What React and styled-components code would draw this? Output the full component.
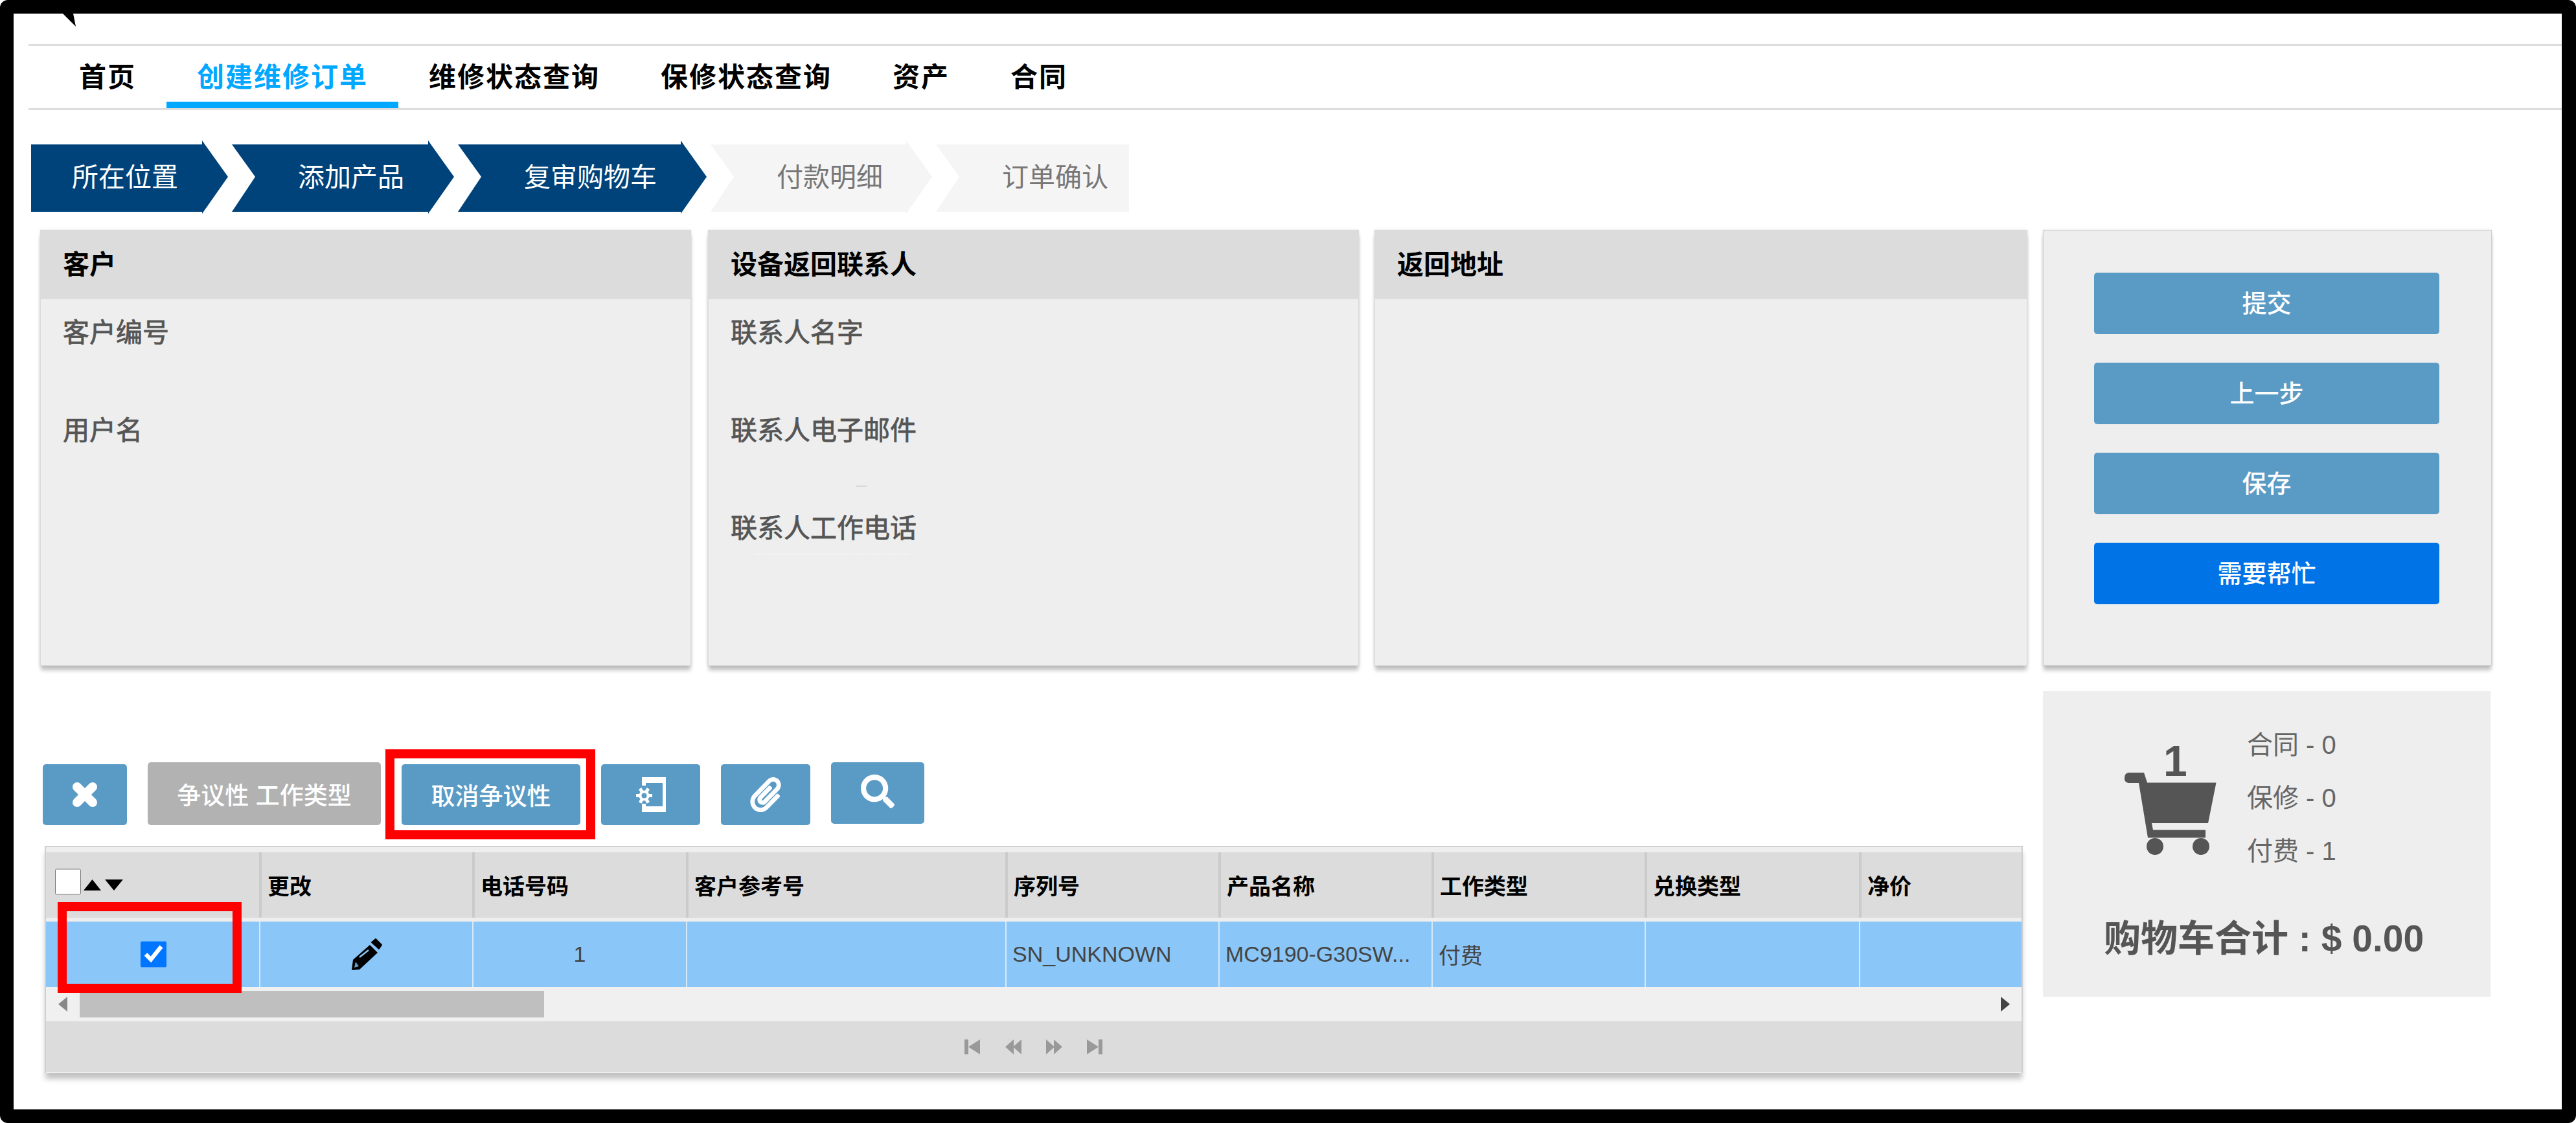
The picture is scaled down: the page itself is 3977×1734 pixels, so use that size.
import styled, { createGlobalStyle } from 'styled-components';
import { FaPaperclip, FaSearch } from 'react-icons/fa';

const GlobalStyle = createGlobalStyle`
  html, body { margin: 0; padding: 0; background: #fff; }
  body { font-family: "Liberation Sans", "Noto Sans CJK SC", sans-serif; }
  * { box-sizing: border-box; }
`;

const COLUMNS = '329px 329px 330px 493px 329px 329px 329px 331px 251px';
const FONT = '"Liberation Sans", "Noto Sans CJK SC", sans-serif';

const Frame = styled.div`
  position: relative;
  width: 3977px;
  height: 1734px;
  border: 21px solid #000;
  border-right-width: 22px;
  border-radius: 12px;
  background: #fff;
  overflow: hidden;
`;
const CornerMark = styled.svg`
  position: absolute;
  left: 76px;
  top: 0;
`;
const TopBar = styled.div`
  height: 50px;
  margin-left: 23px;
  border-bottom: 3px solid #ddd;
`;
const NavBar = styled.nav`
  display: flex;
  height: 99px;
  margin-left: 23px;
  padding: 12px 0 0 31px;
  border-bottom: 3px solid #ddd;
`;
const NavItem = styled.a`
  height: 84px;
  padding: 0 47px;
  font-size: 42px;
  font-weight: 700;
  letter-spacing: 2px;
  line-height: 74px;
  color: ${(p) => (p.$active ? '#00a8ff' : '#000')};
  border-bottom: 10px solid ${(p) => (p.$active ? '#00a8ff' : 'transparent')};
`;
const StepBar = styled.div`
  display: flex;
  gap: 6px;
  margin: 47px 0 0 27px;
`;
const Step = styled.div`
  width: ${(p) => p.$width}px;
  height: 113px;
  padding-left: ${(p) => (p.$first ? 63 : 102)}px;
  font-size: 41px;
  line-height: 114px;
  color: ${(p) => (p.$done ? '#fff' : '#777')};
  background: ${(p) => (p.$done ? '#00437a' : '#f5f5f5')};
  clip-path: polygon(
    0 6px,
    ${(p) => (p.$last ? '100% 6px, 100% 110px' : 'calc(100% - 40px) 6px, calc(100% - 40px) 0, 100% 56px, calc(100% - 40px) 113px, calc(100% - 40px) 110px')},
    0 110px
    ${(p) => (p.$first ? '' : ', 36px 56px')}
  );
`;
const PanelRow = styled.div`
  display: grid;
  grid-template-columns: 1007px 1005px 1008px 693px;
  column-gap: 24px;
  margin: 25px 0 0 41px;
`;
const Panel = styled.section`
  height: 673px;
  margin-right: ${(p) => p.$trim || 0}px;
  background: #eee;
  border: 1px solid #dcdcdc;
  box-shadow: 0 8px 6px -1px rgba(0, 0, 0, 0.24), 0 0 4px rgba(0, 0, 0, 0.12);
`;
const PanelHead = styled.h2`
  margin: 0;
  height: 106px;
  padding-left: 34px;
  background: #dcdcdc;
  font-size: 41px;
  font-weight: 700;
  line-height: 106px;
  color: #000;
`;
const PanelBody = styled.div`
  padding: 27px 34px 0;
`;
const FieldLabel = styled.div`
  position: relative;
  height: 151px;
  font-size: 41px;
  line-height: 50px;
  color: #555;
  -webkit-text-stroke: 0.8px #555;
  &::before {
    content: '';
    display: ${(p) => (p.$marked ? 'block' : 'none')};
    position: absolute;
    left: 193px;
    top: -41px;
    width: 17px;
    border-top: 1px solid #aaa;
  }
  &::after {
    content: '';
    display: ${(p) => (p.$marked ? 'block' : 'none')};
    position: absolute;
    left: 38px;
    top: 64px;
    width: 238px;
    border-top: 1px dashed #fff;
  }
`;
const ActionPanel = styled(Panel)`
  display: flex;
  flex-direction: column;
  gap: 44px;
  padding: 65px 80px 0 78px;
  border-color: #d0d0d0;
`;
const ActionButton = styled.button`
  height: 95px;
  padding: 0 0 6px;
  border: 0;
  border-radius: 5px;
  background: ${(p) => (p.$help ? '#0073e6' : '#5a9bc6')};
  font-family: ${FONT};
  font-size: 38px;
  font-weight: 500;
  color: #fff;
`;
const LowerRow = styled.div`
  display: grid;
  grid-template-columns: 3092px 691px;
  margin: 39px 0 0 41px;
`;
const LowerLeft = styled.div`
  padding: 110px 0 0 4px;
`;
const Toolbar = styled.div`
  display: flex;
  align-items: flex-start;
  gap: 32px;
  height: 97px;
`;
const ToolButton = styled.button`
  position: relative;
  display: flex;
  align-items: center;
  justify-content: center;
  width: ${(p) => p.$width}px;
  height: ${(p) => (p.$height ? p.$height : 94)}px;
  margin-top: ${(p) => (p.$raised ? 0 : 3)}px;
  padding: 0 0 ${(p) => p.$lift || 0}px;
  border: 0;
  border-radius: 5px;
  background: ${(p) => (p.$muted ? '#b2b2b2' : '#5a9bc6')};
  font-family: ${FONT};
  font-size: 37px;
  font-weight: 500;
  color: #fff;
`;
const RedBox = styled.span`
  position: absolute;
  left: ${(p) => p.$left}px;
  right: ${(p) => p.$right}px;
  top: ${(p) => p.$top}px;
  bottom: ${(p) => p.$bottom}px;
  border: 14px solid #ff0000;
  z-index: 2;
  pointer-events: none;
`;
const Table = styled.div`
  width: 3054px;
  height: 351px;
  margin: 32px 0 0 3px;
  background: #eee;
  border: 2px solid #d0d0d0;
  border-bottom: 0;
  box-shadow: 0 10px 8px -1px rgba(0, 0, 0, 0.24);
`;
const HeaderRow = styled.div`
  display: grid;
  grid-template-columns: ${COLUMNS};
  height: 101px;
  margin-top: 8px;
`;
const HeaderCell = styled.div`
  display: flex;
  align-items: center;
  padding-left: ${(p) => (p.$first ? 12 : 9)}px;
  background: #dcdcdc;
  border-left: 4px solid ${(p) => (p.$first ? 'transparent' : '#cbcbcb')};
  font-size: 34px;
  font-weight: 700;
  color: #000;
`;
const BodyRow = styled.div`
  display: grid;
  grid-template-columns: ${COLUMNS};
  height: 101px;
  margin-top: 6px;
  background: #8ac6f7;
`;
const BodyCell = styled.div`
  position: relative;
  display: flex;
  align-items: center;
  justify-content: ${(p) => (p.$center ? 'center' : 'flex-start')};
  padding-left: ${(p) => (p.$center ? 0 : 9)}px;
  border-left: 2px solid ${(p) => (p.$first ? 'transparent' : '#d6e9fb')};
  font-size: 34px;
  color: #444;
  white-space: nowrap;
`;
const CheckBox = styled.input`
  flex: none;
  width: 40px;
  height: 41px;
  margin: ${(p) => (p.$raised ? '-10px 0 0 -2px' : 0)};
  accent-color: #0075ff;
`;
const SortArrows = styled.svg`
  flex: none;
  margin-left: 4px;
`;
const ScrollTrack = styled.div`
  display: flex;
  align-items: center;
  justify-content: space-between;
  height: 53px;
  padding: 0 18px 0 19px;
  background: #f0f0f0;
`;
const ScrollThumb = styled.div`
  width: 717px;
  height: 41px;
  margin: 0 auto 0 19px;
  background: #bfbfbf;
`;
const Pager = styled.div`
  display: flex;
  align-items: center;
  justify-content: center;
  gap: 38px;
  height: 78px;
  padding-left: 0;
  background: #dcdcdc;
`;
const CartSummary = styled.aside`
  height: 472px;
  padding: 42px 0 0 94px;
  background: #eee;
  color: #555;
`;
const CartTop = styled.div`
  display: flex;
  padding-left: 32px;
`;
const CartIconBox = styled.div`
  display: flex;
  flex-direction: column;
  width: 189px;
`;
const CartCount = styled.div`
  height: 48px;
  margin: 42px 0 0 60px;
  font-size: 66px;
  font-weight: 700;
  line-height: 48px;
  color: #555;
`;
const CartLines = styled.div`
  font-size: 40px;
  line-height: 82px;
  color: #666;
`;
const CartTotal = styled.div`
  margin-top: 59px;
  font-size: 57px;
  font-weight: 700;
  line-height: 70px;
  white-space: nowrap;
`;

const PagerIcon = ({ kind }) => {
  const paths = {
    first: 'M0 0h6v23H0zM6 11.5 24 0v23z',
    prev: 'M0 11.5 13 0v23zM12 11.5 25 0v23z',
    next: 'M0 0l13 11.5L0 23zM12 0l13 11.5L12 23z',
    last: 'M0 0l18 11.5L0 23zM18 0h6v23h-6z',
  };
  return (
    <svg width="25" height="23" viewBox="0 0 25 23">
      <path d={paths[kind]} fill="#999" />
    </svg>
  );
};

const CrossIcon = () => (
  <svg width="40" height="40" viewBox="0 0 40 40">
    <path d="M8 8 32 32M32 8 8 32" stroke="#fff" strokeWidth="14" strokeLinecap="round" fill="none" />
  </svg>
);

const GearDoorIcon = () => (
  <svg width="47" height="54" viewBox="0 0 47 54">
    <path d="M10 0H47V54H10V41H16V45H42V9H16V13H10z" fill="#fff" />
    <path d="M1 28.5H26M7.2 17.6 19.8 39.4M19.8 17.6 7.2 39.4" stroke="#fff" strokeWidth="5" fill="none" />
    <circle cx="13.5" cy="28.5" r="8" fill="#fff" />
    <circle cx="13.5" cy="28.5" r="4" fill="#5a9bc6" />
  </svg>
);

const PencilIcon = () => (
  <svg width="48" height="49" viewBox="0 0 48 49">
    <path d="M38 1 47 10 43 16 32 6z" fill="#000" stroke="#000" strokeWidth="2" strokeLinejoin="round" />
    <path d="M29 10 41 22 13 48 1 49 3 33z" fill="#000" />
    <path d="M13 29 27 18" stroke="#8ac6f7" strokeWidth="2.5" fill="none" />
    <path d="M7 36 12 43 5 45z" fill="#6b9cc4" />
  </svg>
);

const CartIcon = () => (
  <svg width="142" height="127" viewBox="0 0 142 127" style={{ display: 'block', marginTop: -6 }}>
    <path
      d="M0 7a7 7 0 0 1 7-7h23l5 15.5h106.5L129 78H42l2 10.5h81v12H36L22 16H7a7 7 0 0 1-7-9z"
      fill="#555"
    />
    <circle cx="47" cy="114" r="13" fill="#555" />
    <circle cx="118" cy="114" r="13" fill="#555" />
  </svg>
);

const ScrollArrow = ({ right }) => (
  <svg width="14" height="23" viewBox="0 0 14 23">
    <path d={right ? 'M0 0l14 11.5L0 23z' : 'M14 0 0 11.5 14 23z'} fill={right ? '#444' : '#888'} />
  </svg>
);

const steps = [
  { label: '所在位置', width: 304, done: true, first: true },
  { label: '添加产品', width: 343, done: true },
  { label: '复审购物车', width: 384, done: true },
  { label: '付款明细', width: 342 },
  { label: '订单确认', width: 298, last: true },
];
const navItems = ['首页', '创建维修订单', '维修状态查询', '保修状态查询', '资产', '合同'];
const headers = ['更改', '电话号码', '客户参考号', '序列号', '产品名称', '工作类型', '兑换类型', '净价'];

function App() {
  return (
    <Frame>
      <GlobalStyle />
      <CornerMark width="22" height="20" viewBox="0 0 22 20">
        <path d="M0 0h16l4 20z" fill="#000" />
      </CornerMark>
      <TopBar />
      <NavBar>
        {navItems.map((item, i) => (
          <NavItem key={item} $active={i === 1}>{item}</NavItem>
        ))}
      </NavBar>
      <StepBar>
        {steps.map((s) => (
          <Step key={s.label} $width={s.width} $done={s.done} $first={s.first} $last={s.last}>{s.label}</Step>
        ))}
      </StepBar>
      <PanelRow>
        <Panel $trim={2}>
          <PanelHead>客户</PanelHead>
          <PanelBody>
            <FieldLabel>客户编号</FieldLabel>
            <FieldLabel>用户名</FieldLabel>
          </PanelBody>
        </Panel>
        <Panel>
          <PanelHead>设备返回联系人</PanelHead>
          <PanelBody>
            <FieldLabel>联系人名字</FieldLabel>
            <FieldLabel>联系人电子邮件</FieldLabel>
            <FieldLabel $marked>联系人工作电话</FieldLabel>
          </PanelBody>
        </Panel>
        <Panel>
          <PanelHead>返回地址</PanelHead>
        </Panel>
        <ActionPanel as="div">
          <ActionButton>提交</ActionButton>
          <ActionButton>上一步</ActionButton>
          <ActionButton>保存</ActionButton>
          <ActionButton $help>需要帮忙</ActionButton>
        </ActionPanel>
      </PanelRow>
      <LowerRow>
        <LowerLeft>
          <Toolbar>
            <ToolButton $width={130}><CrossIcon /></ToolButton>
            <ToolButton $width={360} $height={97} $raised $muted>争议性 工作类型</ToolButton>
            <ToolButton $width={276}>
              取消争议性
              <RedBox $left={-25} $right={-23} $top={-23} $bottom={-22} />
            </ToolButton>
            <ToolButton $width={153}><GearDoorIcon /></ToolButton>
            <ToolButton $width={138}><FaPaperclip size={54} /></ToolButton>
            <ToolButton $width={144} $height={95} $raised $lift={6}><FaSearch size={52} /></ToolButton>
          </Toolbar>
          <Table>
            <HeaderRow>
              <HeaderCell $first>
                <CheckBox type="checkbox" readOnly $raised />
                <SortArrows width="61" height="17" viewBox="0 0 61 17">
                  <path d="M0 17 13.5 0 27 17zM33 0h28L47 17z" fill="#000" />
                </SortArrows>
              </HeaderCell>
              {headers.map((h) => (
                <HeaderCell key={h}>{h}</HeaderCell>
              ))}
            </HeaderRow>
            <BodyRow>
              <BodyCell $first $center>
                <CheckBox type="checkbox" checked readOnly />
                <RedBox $left={16} $right={27} $top={-30} $bottom={-9} />
              </BodyCell>
              <BodyCell $center><PencilIcon /></BodyCell>
              <BodyCell $center>1</BodyCell>
              <BodyCell />
              <BodyCell>SN_UNKNOWN</BodyCell>
              <BodyCell>MC9190-G30SW...</BodyCell>
              <BodyCell>付费</BodyCell>
              <BodyCell />
              <BodyCell />
            </BodyRow>
            <ScrollTrack>
              <ScrollArrow />
              <ScrollThumb />
              <ScrollArrow right />
            </ScrollTrack>
            <Pager>
              <PagerIcon kind="first" />
              <PagerIcon kind="prev" />
              <PagerIcon kind="next" />
              <PagerIcon kind="last" />
            </Pager>
          </Table>
        </LowerLeft>
        <CartSummary>
          <CartTop>
            <CartIconBox>
              <CartCount>1</CartCount>
              <CartIcon />
            </CartIconBox>
            <CartLines>
              <div>合同 - 0</div>
              <div>保修 - 0</div>
              <div>付费 - 1</div>
            </CartLines>
          </CartTop>
          <CartTotal>购物车合计 : $ 0.00</CartTotal>
        </CartSummary>
      </LowerRow>
    </Frame>
  );
}

export default App;
